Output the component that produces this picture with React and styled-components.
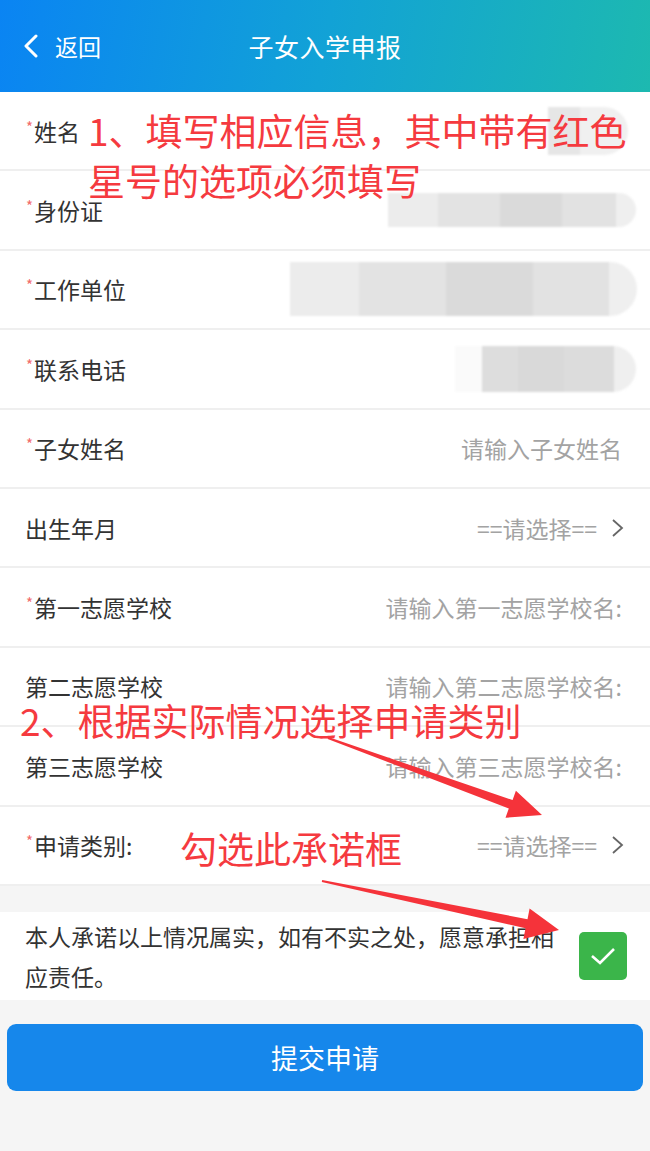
import React from "react";
import styled, { createGlobalStyle } from "styled-components";

const GlobalStyle = createGlobalStyle`
  html, body {
    margin: 0;
    padding: 0;
    background: #f5f5f5;
  }
  body {
    font-family: "Noto Sans CJK SC", "Noto Sans", "Liberation Sans", sans-serif;
  }
`;

const fields = [
  { label: "姓名", required: true, blur: { w: 80, h: 48, mr: -6, tone: "light" } },
  { label: "身份证", required: true, blur: { w: 248, h: 34, mr: -14, tone: "mid" } },
  { label: "工作单位", required: true, blur: { w: 347, h: 54, mr: -15, tone: "mid" } },
  { label: "联系电话", required: true, blur: { w: 181, h: 46, mr: -14, tone: "pill" } },
  { label: "子女姓名", required: true, placeholder: "请输入子女姓名" },
  { label: "出生年月", select: true },
  { label: "第一志愿学校", required: true, placeholder: "请输入第一志愿学校名:" },
  { label: "第二志愿学校", placeholder: "请输入第二志愿学校名:" },
  { label: "第三志愿学校", placeholder: "请输入第三志愿学校名:" },
  { label: "申请类别:", required: true, select: true },
];

const App = () => {
  return (
    <>
      <GlobalStyle />
      <Page>
        <Header>
          <BackButton>
            <svg width="18" height="24" viewBox="0 0 18 24">
              <path d="M14 2 L4 12 L14 22" fill="none" stroke="#fff" strokeWidth="3" strokeLinecap="round" strokeLinejoin="round" />
            </svg>
            <span>返回</span>
          </BackButton>
          <Title>子女入学申报</Title>
        </Header>

        <Form>
          {fields.map((f) => (
            <Row key={f.label}>
              <Label>
                {f.required && <Star>*</Star>}
                {f.label}
              </Label>
              {f.blur && (
                <Mosaic $w={f.blur.w} $h={f.blur.h} $mr={f.blur.mr} $tone={f.blur.tone} />
              )}
              {f.placeholder && <Placeholder>{f.placeholder}</Placeholder>}
              {f.select && (
                <Picker>
                  ==请选择==
                  <svg width="13" height="20" viewBox="0 0 13 20">
                    <path d="M2 2 L11 10 L2 18" fill="none" stroke="#666" strokeWidth="1.8" />
                  </svg>
                </Picker>
              )}
            </Row>
          ))}
        </Form>

        <Promise>
          <PromiseText>本人承诺以上情况属实，如有不实之处，愿意承担相应责任。</PromiseText>
          <CheckBox>
            <svg width="26" height="20" viewBox="0 0 26 20">
              <path d="M2 10 L10 17 L24 3" fill="none" stroke="#fff" strokeWidth="2.6" />
            </svg>
          </CheckBox>
        </Promise>

        <ButtonBar>
          <SubmitButton>提交申请</SubmitButton>
        </ButtonBar>

        <Note $top={105} $left={88}>
          1、填写相应信息，其中带有红色
          <br />
          星号的选项必须填写
        </Note>
        <Note $top={695} $left={20}>2、根据实际情况选择申请类别</Note>
        <Note $top={823} $left={180}>勾选此承诺框</Note>

        <Arrows width="650" height="1151" viewBox="0 0 650 1151">
          <polygon points="327.7,738.9 508.8,808.5 505.5,817.8 542,815 515.9,790.8 512.6,800.1 328.3,737.1" />
          <polygon points="321.8,882 525.5,928.2 523.4,939 559,930 529.6,908.4 527.5,919.2 322.2,880" />
        </Arrows>
      </Page>
    </>
  );
};

export default App;

const Page = styled.div`
  position: relative;
  width: 650px;
  min-height: 1151px;
  background: #f5f5f5;
  overflow: hidden;
`;

const Header = styled.header`
  position: relative;
  height: 92px;
  display: flex;
  align-items: center;
  justify-content: center;
  background: linear-gradient(100deg, #0a84f3 0%, #12a2d6 50%, #1db9b0 100%);
  color: #fff;
`;

const BackButton = styled.div`
  position: absolute;
  left: 22px;
  top: 0;
  bottom: 0;
  display: flex;
  align-items: center;
  gap: 15px;
  font-size: 23px;

  span {
    line-height: 1;
  }
`;

const Title = styled.h1`
  margin: 0;
  font-size: 25px;
  font-weight: normal;
  letter-spacing: 0.5px;
`;

const Form = styled.section`
  background: #fff;
`;

const Row = styled.div`
  height: 77.4px;
  display: flex;
  align-items: center;
  justify-content: space-between;
  padding: 0 28px 0 25px;
  border-bottom: 2px solid #efefef;
  font-size: 23px;
`;

const Label = styled.div`
  color: #333;
  white-space: nowrap;
  display: flex;
  align-items: flex-start;
`;

const Star = styled.span`
  color: #f26b6b;
  font-size: 15px;
  line-height: 1;
  margin: 5px 1px 0 1px;
`;

const Placeholder = styled.div`
  color: #a3a3a3;
  white-space: nowrap;
`;

const Picker = styled.div`
  display: flex;
  align-items: center;
  gap: 14px;
  color: #a3a3a3;
  margin-right: -2px;
`;

const tones = {
  light: "linear-gradient(90deg, #e6e6e6 0 40%, #f0f0f0 40% 100%)",
  mid: "linear-gradient(90deg, #ececec 0 20%, #e3e3e3 20% 45%, #dadada 45% 70%, #e2e2e2 70% 92%, #efefef 92%)",
  pill: "linear-gradient(90deg, #fafafa 0 15%, #dddddd 15% 35%, #d9d9d9 35% 60%, #dcdcdc 60% 88%, #efefef 88%)",
};

const Mosaic = styled.div`
  width: ${(p) => p.$w}px;
  height: ${(p) => p.$h}px;
  margin-right: ${(p) => p.$mr}px;
  border-radius: 0 ${(p) => p.$h / 2}px ${(p) => p.$h / 2}px 0;
  background: ${(p) => tones[p.$tone]};
  filter: blur(1.2px);
`;

const Promise = styled.section`
  margin-top: 26px;
  background: #fff;
  height: 88px;
  display: flex;
  align-items: center;
  padding: 0 23px 0 25px;
  gap: 10px;
`;

const PromiseText = styled.p`
  flex: 1;
  margin: 0;
  font-size: 23px;
  line-height: 40px;
  color: #333;
`;

const CheckBox = styled.div`
  width: 48px;
  height: 48px;
  flex: none;
  border-radius: 5px;
  background: #3bb54a;
  display: flex;
  align-items: center;
  justify-content: center;
`;

const ButtonBar = styled.div`
  padding: 24px 7px;
`;

const SubmitButton = styled.button`
  width: 100%;
  height: 67px;
  border: none;
  border-radius: 9px;
  background: #1687eb;
  color: #fff;
  font-family: inherit;
  font-size: 27px;
`;

const Note = styled.div`
  position: absolute;
  top: ${(p) => p.$top}px;
  left: ${(p) => p.$left}px;
  font-size: 37px;
  line-height: 50px;
  color: #f53a3f;
  white-space: nowrap;
  pointer-events: none;
`;

const Arrows = styled.svg`
  position: absolute;
  top: 0;
  left: 0;
  pointer-events: none;

  polygon {
    fill: #f5333a;
  }
`;
